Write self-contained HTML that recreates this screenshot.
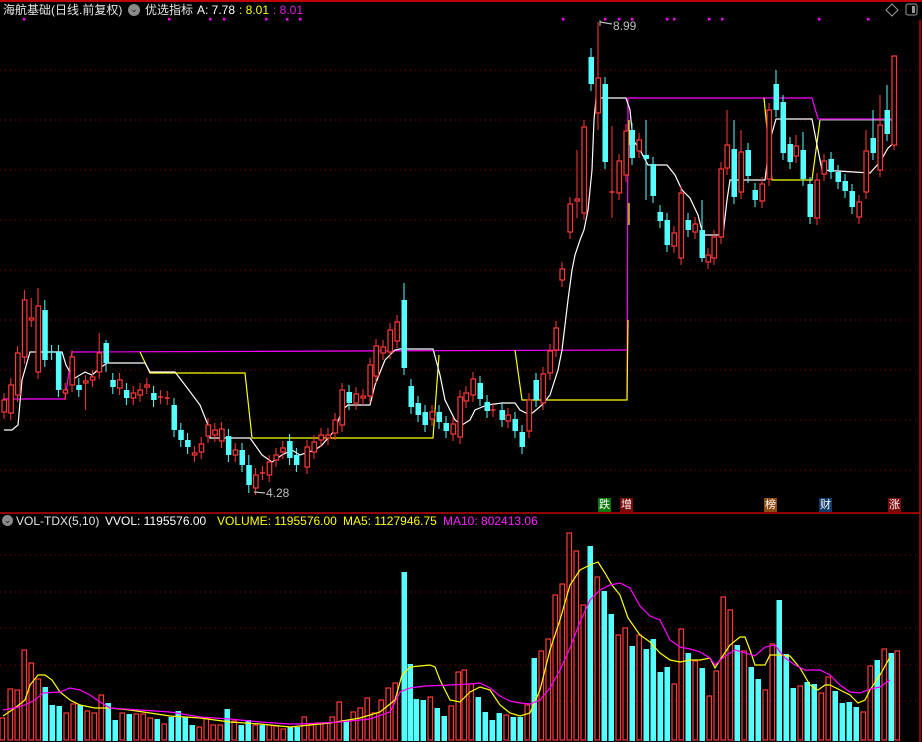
<!DOCTYPE html>
<html><head><meta charset="utf-8">
<style>
html,body{margin:0;padding:0;background:#000;width:922px;height:742px;overflow:hidden}
body{position:relative;font-family:"Liberation Sans","Noto Sans CJK SC",sans-serif}
.t{position:absolute;font-size:12px;white-space:nowrap;line-height:14px}
.tag{position:absolute;top:498px;width:13px;height:14px;font-size:11px;color:#fff;text-align:center;line-height:14px}
</style></head><body>
<svg id="s" width="922" height="742" style="position:absolute;left:0;top:0" xmlns="http://www.w3.org/2000/svg"></svg>
<div class="t" style="left:3px;top:3px;color:#e6e6e6">海航基础(日线.前复权)</div>
<div style="position:absolute;left:128px;top:4px;width:12px;height:12px;border-radius:6px;background:#8a8a8a;color:#222;font-size:9px;text-align:center;line-height:11px">⌄</div>
<div class="t" style="left:145px;top:3px;color:#e6e6e6">优选指标</div>
<div class="t" style="left:197px;top:3px;color:#fff">A: 7.78</div>
<div class="t" style="left:239px;top:3px;color:#ffff00">: 8.01</div>
<div class="t" style="left:273px;top:3px;color:#e020e0">: 8.01</div>
<div style="position:absolute;left:2px;top:515px;width:11px;height:11px;border-radius:6px;background:#8a8a8a;color:#222;font-size:9px;text-align:center;line-height:10px">⌄</div>
<div class="t" style="left:16px;top:514px;color:#e6e6e6">VOL-TDX(5,10)</div>
<div class="t" style="left:105px;top:514px;color:#fff">VVOL: 1195576.00</div>
<div class="t" style="left:217px;top:514px;color:#ffff00">VOLUME: 1195576.00</div>
<div class="t" style="left:343px;top:514px;color:#ffff00">MA5: 1127946.75</div>
<div class="t" style="left:443px;top:514px;color:#ff20ff">MA10: 802413.06</div>
<div class="t" style="left:613px;top:19px;color:#c0c0c0">8.99</div>
<div class="t" style="left:266px;top:486px;color:#c0c0c0">4.28</div>
<div class="tag" style="left:598px;background:#0a7a0a">跌</div>
<div class="tag" style="left:620px;background:#7a0a0a">增</div>
<div class="tag" style="left:764px;background:#8a4a10">榜</div>
<div class="tag" style="left:819px;background:#103a6a">财</div>
<div class="tag" style="left:888px;background:#7a0a0a">涨</div>
<script>
var S=document.getElementById('s'),h='';
function L(x1,y1,x2,y2,c,w,d){h+='<line x1="'+x1+'" y1="'+y1+'" x2="'+x2+'" y2="'+y2+'" stroke="'+c+'" stroke-width="'+(w||1)+'"'+(d?' stroke-dasharray="'+d+'"':'')+'/>';}
function P(pts,c){h+='<polyline fill="none" stroke="'+c+'" stroke-width="1.2" points="'+pts.map(function(p){return p.join(',')}).join(' ')+'"/>';}
// frame
L(0,1,922,1,'#c00000',2);L(920,20,920,742,'#c00000',1.5);L(0,513,920,513,'#c00000',1.5);
[70,120,170,220,270,320,370,420,470].forEach(function(y){L(0,y,918,y,'#8a0000',1,'1 4')});
[555,592,628,665,701].forEach(function(y){L(0,y,918,y,'#8a0000',1,'1 4')});
// markers
[24,169,210,224,266,287,300,563,605,619,632,667,674,709,722,819,868].forEach(function(x){h+='<rect x="'+(x-1)+'" y="18" width="2.5" height="2.5" fill="#ff00ff"/>'});
// icons top-right
h+='<path d="M892 4 L898 10 L892 16 L886 10 Z" fill="none" stroke="#999"/>';
h+='<rect x="906" y="4" width="11" height="11" rx="2" fill="none" stroke="#999"/><rect x="912" y="6" width="3" height="7" fill="#999"/>';
// lines (behind candles)
P([[3,399],[65,399],[72,352],[627,350]],'#ff00ff');
P([[627,400],[628,98],[812,98],[818,119],[895,119]],'#ff00ff');
P([[140,352],[150,373],[245,373],[252,438],[433,438],[439,355]],'#ffff00');
P([[515,350],[522,400],[627,400],[628,320]],'#ffff00');
P([[629,120],[629,145]],'#ffff00');P([[629,203],[629,225]],'#ffff00');
P([[764,98],[772,180],[812,180],[820,120]],'#ffff00');
P([[820,120],[895,120]],'#909090');
P([[4,430],[12,430],[18,425],[22,380],[30,352],[62,352],[66,365],[70,372],[75,378],[85,372],[92,375],[100,368],[107,363],[145,363],[150,372],[175,372],[185,385],[200,405],[208,425],[210,438],[250,438],[255,445],[262,455],[272,462],[282,455],[292,450],[300,455],[315,450],[322,445],[335,430],[342,410],[348,405],[370,405],[375,385],[385,360],[395,350],[400,349],[433,349],[440,375],[445,400],[455,420],[462,425],[470,420],[475,410],[487,405],[502,403],[515,403],[520,410],[530,415],[542,405],[550,395],[558,370],[562,350],[568,300],[572,270],[575,255],[580,240],[584,230],[588,210],[592,170],[594,120],[596,98],[626,98],[630,110],[633,140],[640,150],[648,165],[667,165],[675,175],[682,190],[690,198],[698,215],[703,235],[723,235],[727,200],[730,180],[765,180],[770,140],[776,119],[812,119],[818,150],[822,170],[870,173],[880,162],[888,148],[895,142]],'#ffffff');
// candles
var left=[[412,400],[413,385],[395,353],[357,300,290],[320,318,298],[372,306,288],[310,360,300],[352,353],[352,390],[393,390],[385,357],[385,390],[383,381,375,410],[380,377],[372,353,333],[343,363,340,372],[380,387],[388,380],[390,398],[398,393],[395,390],[387,385],[393,400],[397,397],[398,398],[405,430],[430,440],[440,447],[455,453],[452,444],[436,425],[435,430],[441,429],[436,455],[455,450],[450,465],[465,485,455,493],[488,475],[473,473],[475,462],[460,455],[452,448],[441,458],[455,465]];
var C=left.map(function(a,i){return [4+i*6.8].concat(a)});
C=C.concat([[307,467,447],[314,452,442],[321,440,435],[328,438,435],[335,433,420],[342,425,390],[349,392,403],[356,403,394],[363,398,396],[370,396,365],[376,376,346],[383,353,347],[390,352,330],[397,341,322],[404,300,368,283],[411,386,407],[418,403,415],[425,412,425],[432,419,412],[439,412,422],[446,423,431],[453,434,424],[460,437,397],[466,401,393],[473,395,379],[480,383,399],[487,402,411],[493,410,410],[502,410,420],[508,421,415],[515,419,431],[522,432,447],[529,431,400],[536,380,400],[543,403,374],[550,373,351],[556,350,328],[562,280,269],[570,232,204],[577,201,199,150,218],[584,213,127],[591,57,84,48],[598,113,78,22,130],[605,84,162],[612,192,192,126,218],[619,193,161],[626,175,131],[632,130,158],[639,151,140],[646,155,159,120,200],[653,164,196],[660,212,221],[667,220,245],[674,246,233],[681,258,193],[688,220,230],[695,232,224],[702,230,258,200,262],[708,262,255],[714,258,237],[721,237,169],[727,168,145,110],[734,149,197,120],[741,192,152,130],[748,150,176],[755,190,200],[762,201,184],[769,179,110],[776,84,110,70],[783,102,153],[790,144,162],[796,156,146,135],[803,150,179,132],[810,184,217],[817,218,180],[824,174,161],[831,159,172],[838,172,182],[845,181,191],[852,191,207],[859,217,202],[866,192,151,130],[873,138,153,110],[880,170,125,95],[887,110,134,85],[894,145,56,56,150]]);
C.forEach(function(c){var x=c[0],o=c[1],cl=c[2],t=Math.min(o,cl),b=Math.max(o,cl);var hi=c[3]||t-7,lo=c[4]||b+7;var red=cl<=o;var col=red?'#ff3838':'#54ffff';
L(x,hi,x,t,col);L(x,b,x,lo,col);
if(b-t<1.5){L(x-2.5,t,x+2.5,t,col,1.5)}
else if(red){h+='<rect x="'+(x-2)+'" y="'+t+'" width="4.5" height="'+(b-t)+'" fill="#000" stroke="'+col+'" stroke-width="1.2"/>'}
else{h+='<rect x="'+(x-2.5)+'" y="'+t+'" width="5.5" height="'+(b-t)+'" fill="'+col+'"/>'}});
// labels arrows
P([[600,22],[612,24]],'#c0c0c0');L(600,20,600,26,'#c0c0c0');
P([[254,492],[265,493]],'#c0c0c0');
// volume bars
var V=[[2,718,1],[10,689,1],[17,690,1],[24,650,1],[31,663,1],[38,679,1],[45,687,0],[52,705,0],[59,706,0],[66,713,1],[73,704,1],[80,705,0],[87,711,1],[94,713,1],[101,695,1],[108,703,0],[115,720,0],[122,713,1],[129,714,0],[136,714,1],[143,714,1],[150,718,1],[157,719,0],[164,724,1],[171,717,0],[178,711,0],[185,717,0],[192,725,0],[199,727,1],[206,718,1],[213,725,1],[220,725,1],[227,709,0],[234,721,1],[241,725,0],[248,720,0],[255,725,1],[262,725,0],[269,725,1],[276,726,1],[283,729,1],[290,727,0],[297,727,0],[304,717,1],[311,724,1],[318,723,1],[325,723,1],[332,717,1],[339,702,1],[346,720,0],[353,712,1],[360,708,1],[367,698,1],[374,713,1],[381,700,1],[388,688,1],[395,683,1],[404,572,0],[410,664,0],[416,699,0],[423,700,0],[430,697,1],[437,708,0],[444,716,0],[451,706,1],[458,672,1],[464,670,1],[471,684,1],[478,697,0],[485,712,0],[492,720,0],[499,713,0],[506,715,1],[513,717,0],[520,717,0],[527,705,1],[534,658,0],[541,651,1],[548,639,1],[555,595,1],[562,584,1],[569,533,1],[576,551,1],[583,605,1],[590,546,0],[597,577,1],[604,591,0],[611,614,0],[618,635,1],[625,628,1],[632,646,0],[639,635,1],[646,649,0],[653,639,0],[660,672,0],[667,667,0],[674,684,1],[681,629,1],[688,653,0],[695,661,1],[702,668,0],[709,696,1],[716,671,1],[723,597,1],[730,610,1],[737,645,0],[744,651,1],[751,667,0],[758,679,0],[765,690,1],[772,644,1],[779,600,0],[786,654,0],[793,688,0],[800,686,1],[807,682,0],[814,684,0],[821,693,1],[828,677,1],[835,691,0],[842,703,0],[849,702,0],[856,707,0],[863,712,1],[870,666,1],[877,660,0],[884,649,1],[891,653,0],[897,651,1]];
V.forEach(function(v){var x=v[0],t=v[1];if(v[2])h+='<rect x="'+(x-2)+'" y="'+t+'" width="4.5" height="'+(740-t)+'" fill="none" stroke="#ff3838" stroke-width="1.2"/>';else h+='<rect x="'+(x-2.5)+'" y="'+t+'" width="5.5" height="'+(741-t)+'" fill="#54ffff"/>'});
P([[3,716],[15,708],[25,700],[30,685],[38,675],[45,675],[52,680],[60,692],[70,700],[80,705],[95,708],[110,708],[130,710],[150,713],[170,716],[200,718],[230,722],[260,724],[290,727],[300,726],[330,723],[360,718],[380,712],[395,700],[402,675],[410,667],[430,665],[435,667],[440,680],[450,700],[460,702],[470,692],[480,687],[490,690],[500,705],[510,713],[520,716],[530,713],[540,690],[550,650],[560,620],[570,585],[580,570],[590,565],[598,562],[605,573],[612,585],[620,595],[628,618],[640,635],[650,642],[660,653],[670,660],[680,662],[690,660],[700,660],[710,658],[715,668],[720,660],[730,645],[740,637],[745,637],[750,650],[755,665],[765,665],[770,655],[780,655],[790,656],[800,668],[810,685],[818,690],[825,685],[830,685],[840,690],[850,695],[858,703],[865,700],[870,690],[880,675],[890,657]],'#ffff00');
P([[3,710],[15,708],[25,705],[35,700],[43,693],[60,692],[70,688],[80,690],[90,695],[100,702],[110,708],[140,710],[170,712],[200,717],[230,719],[260,722],[290,724],[300,724],[340,722],[370,719],[390,712],[400,692],[410,688],[425,686],[450,685],[470,684],[480,683],[490,688],[500,696],[510,701],[520,703],[530,704],[540,700],[550,688],[560,670],[570,648],[580,622],[590,600],[600,590],[610,585],[620,583],[630,588],[640,606],[650,616],[660,620],[670,640],[680,647],[690,649],[700,652],[710,658],[715,665],[725,656],[735,650],[745,653],[755,656],[765,647],[775,645],[785,658],[795,665],[805,670],[820,670],[830,675],[840,685],[850,692],[860,693],[870,689],[880,687],[890,680]],'#ff00ff');
S.innerHTML=h;
</script>
</body></html>
